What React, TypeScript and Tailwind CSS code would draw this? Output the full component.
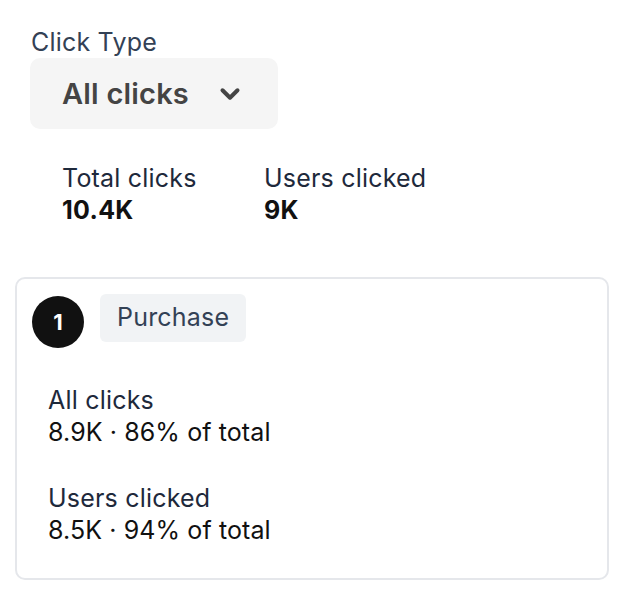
import { ChevronDown } from "lucide-react";

const font = { fontFamily: "Inter, 'Noto Sans', sans-serif" };

function Stat({ label, value }: { label: string; value: string }) {
    return (
        <div className="flex flex-col">
            <span className="text-[25px] leading-[32px] tracking-[0.2px] text-[#1e293b]">{label}</span>
            <span className="text-[25px] leading-[32px] tracking-[0.3px] font-bold text-[#111111]">{value}</span>
        </div>
    );
}

function Metric({ label, value }: { label: string; value: string }) {
    return (
        <div className="flex flex-col">
            <span className="text-[25px] leading-[32px] tracking-[0.2px] text-[#1e293b]">{label}</span>
            <span className="text-[25px] leading-[32px] tracking-[0.1px] text-[#111111]">{value}</span>
        </div>
    );
}

export default function App() {
    return (
        <div className="w-[624px] h-[592px] bg-white pt-[26px] pl-[15px]" style={font}>
            <div className="pl-[15px]">
                <div className="text-[25px] leading-[32px] tracking-[0.2px] text-[#334155] pl-[1px]">Click Type</div>
                <div className="w-[248px] h-[71px] rounded-[10px] bg-[#f5f5f5] flex items-center pl-[32px] gap-[26px]">
                    <span className="text-[29px] font-semibold tracking-[0.2px] text-[#444444]">All clicks</span>
                    <ChevronDown className="w-[30px] h-[30px] text-[#444444]" strokeWidth={3.2} />
                </div>
                <div className="flex pl-[32px] mt-[33px]">
                    <div className="w-[202px]">
                        <Stat label="Total clicks" value="10.4K" />
                    </div>
                    <Stat label="Users clicked" value="9K" />
                </div>
            </div>

            <div className="mt-[51px] w-[594px] h-[303px] border-2 border-[#e5e7eb] rounded-[10px] pt-[17px] pl-[15px]">
                <div className="flex items-start gap-[16px]">
                    <div className="w-[52px] h-[52px] rounded-full bg-[#111111] flex items-center justify-center text-white text-[22px] font-bold">
                        1
                    </div>
                    <div className="-mt-[2px] h-[48px] px-[17px] rounded-[6px] bg-[#f1f3f5] flex items-center text-[25px] tracking-[0.2px] text-[#334155]">
                        Purchase
                    </div>
                </div>
                <div className="pl-[16px] mt-[36px] flex flex-col gap-[34px]">
                    <Metric label="All clicks" value="8.9K · 86% of total" />
                    <Metric label="Users clicked" value="8.5K · 94% of total" />
                </div>
            </div>
        </div>
    );
}
